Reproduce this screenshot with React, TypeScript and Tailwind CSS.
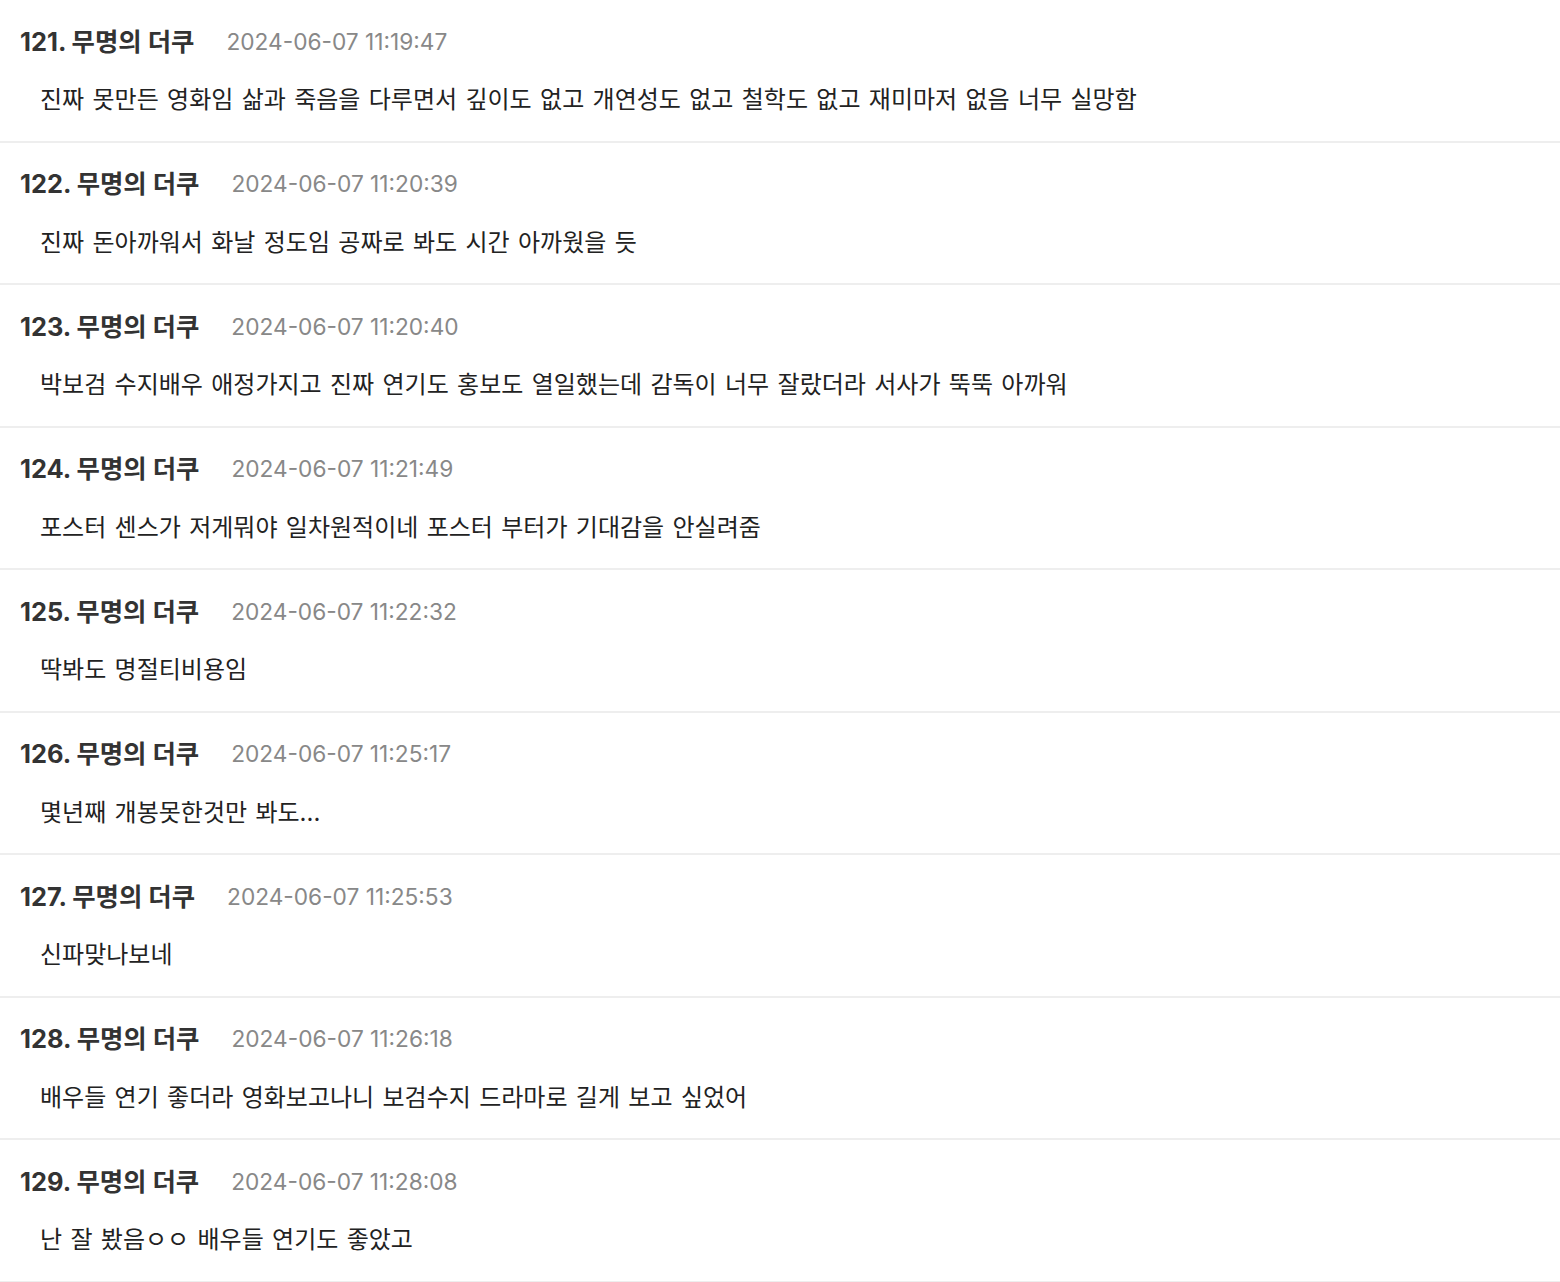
const comments = [
  { no: 121, time: "2024-06-07 11:19:47", text: "진짜 못만든 영화임 삶과 죽음을 다루면서 깊이도 없고 개연성도 없고 철학도 없고 재미마저 없음 너무 실망함" },
  { no: 122, time: "2024-06-07 11:20:39", text: "진짜 돈아까워서 화날 정도임 공짜로 봐도 시간 아까웠을 듯" },
  { no: 123, time: "2024-06-07 11:20:40", text: "박보검 수지배우 애정가지고 진짜 연기도 홍보도 열일했는데 감독이 너무 잘랐더라 서사가 뚝뚝 아까워" },
  { no: 124, time: "2024-06-07 11:21:49", text: "포스터 센스가 저게뭐야 일차원적이네 포스터 부터가 기대감을 안실려줌" },
  { no: 125, time: "2024-06-07 11:22:32", text: "딱봐도 명절티비용임" },
  { no: 126, time: "2024-06-07 11:25:17", text: "몇년째 개봉못한것만 봐도..." },
  { no: 127, time: "2024-06-07 11:25:53", text: "신파맞나보네" },
  { no: 128, time: "2024-06-07 11:26:18", text: "배우들 연기 좋더라 영화보고나니 보검수지 드라마로 길게 보고 싶었어" },
  { no: 129, time: "2024-06-07 11:28:08", text: "난 잘 봤음ㅇㅇ 배우들 연기도 좋았고" },
]

function Comment({ no, time, text }: { no: number; time: string; text: string }) {
  return (
    <div className="border-b-2 border-[#eeeeee] pt-[24px] pb-[22.5px]">
      <div className="flex items-center h-9 pl-5">
        <span className="text-[25.4px] font-bold text-[#333333]">{no}. 무명의 더쿠</span>
        <span className="ml-8 text-[22.7px] text-[#888888]">{time}</span>
      </div>
      <p className="mt-[22px] h-9 leading-9 pl-10 text-[24px] [word-spacing:1.6px] text-[#222222]">{text}</p>
    </div>
  )
}

export default function App() {
  return (
    <main className="w-[1560px] bg-white font-['Inter','Noto_Sans_CJK_KR',sans-serif]">
      {comments.map((c) => (
        <Comment key={c.no} {...c} />
      ))}
    </main>
  )
}
